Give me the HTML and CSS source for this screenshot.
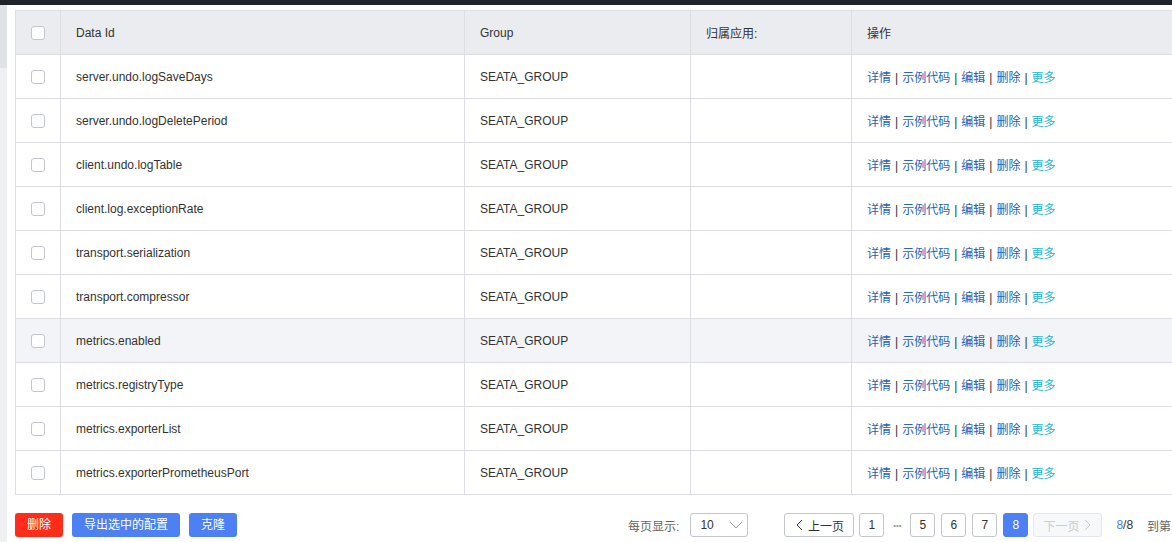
FILE: index.html
```html
<!DOCTYPE html>
<html lang="zh-CN">
<head>
<meta charset="utf-8">
<title>配置列表</title>
<link rel="stylesheet" href="styles.css">
</head>
<body>
<div class="topbar"></div>
<div class="layout">
  <div class="side"><div class="side-top"></div></div>
  <div class="main">
    <table class="grid">
      <colgroup>
        <col class="c-check"><col class="c-id"><col class="c-group"><col class="c-app"><col class="c-op">
      </colgroup>
      <thead>
        <tr><th class="chk"><span class="cb"></span></th><th>Data Id</th><th>Group</th><th>归属应用:</th><th>操作</th></tr>
      </thead>
      <tbody>
        <tr><td class="chk"><span class="cb"></span></td><td>server.undo.logSaveDays</td><td>SEATA_GROUP</td><td></td><td class="ops"><a>详情</a><i>|</i><a>示例代码</a><i>|</i><a>编辑</a><i>|</i><a>删除</a><i>|</i><a class="more">更多</a></td></tr>
        <tr><td class="chk"><span class="cb"></span></td><td>server.undo.logDeletePeriod</td><td>SEATA_GROUP</td><td></td><td class="ops"><a>详情</a><i>|</i><a>示例代码</a><i>|</i><a>编辑</a><i>|</i><a>删除</a><i>|</i><a class="more">更多</a></td></tr>
        <tr><td class="chk"><span class="cb"></span></td><td>client.undo.logTable</td><td>SEATA_GROUP</td><td></td><td class="ops"><a>详情</a><i>|</i><a>示例代码</a><i>|</i><a>编辑</a><i>|</i><a>删除</a><i>|</i><a class="more">更多</a></td></tr>
        <tr><td class="chk"><span class="cb"></span></td><td>client.log.exceptionRate</td><td>SEATA_GROUP</td><td></td><td class="ops"><a>详情</a><i>|</i><a>示例代码</a><i>|</i><a>编辑</a><i>|</i><a>删除</a><i>|</i><a class="more">更多</a></td></tr>
        <tr><td class="chk"><span class="cb"></span></td><td>transport.serialization</td><td>SEATA_GROUP</td><td></td><td class="ops"><a>详情</a><i>|</i><a>示例代码</a><i>|</i><a>编辑</a><i>|</i><a>删除</a><i>|</i><a class="more">更多</a></td></tr>
        <tr><td class="chk"><span class="cb"></span></td><td>transport.compressor</td><td>SEATA_GROUP</td><td></td><td class="ops"><a>详情</a><i>|</i><a>示例代码</a><i>|</i><a>编辑</a><i>|</i><a>删除</a><i>|</i><a class="more">更多</a></td></tr>
        <tr class="hover"><td class="chk"><span class="cb"></span></td><td>metrics.enabled</td><td>SEATA_GROUP</td><td></td><td class="ops"><a>详情</a><i>|</i><a>示例代码</a><i>|</i><a>编辑</a><i>|</i><a>删除</a><i>|</i><a class="more">更多</a></td></tr>
        <tr><td class="chk"><span class="cb"></span></td><td>metrics.registryType</td><td>SEATA_GROUP</td><td></td><td class="ops"><a>详情</a><i>|</i><a>示例代码</a><i>|</i><a>编辑</a><i>|</i><a>删除</a><i>|</i><a class="more">更多</a></td></tr>
        <tr><td class="chk"><span class="cb"></span></td><td>metrics.exporterList</td><td>SEATA_GROUP</td><td></td><td class="ops"><a>详情</a><i>|</i><a>示例代码</a><i>|</i><a>编辑</a><i>|</i><a>删除</a><i>|</i><a class="more">更多</a></td></tr>
        <tr><td class="chk"><span class="cb"></span></td><td>metrics.exporterPrometheusPort</td><td>SEATA_GROUP</td><td></td><td class="ops"><a>详情</a><i>|</i><a>示例代码</a><i>|</i><a>编辑</a><i>|</i><a>删除</a><i>|</i><a class="more">更多</a></td></tr>
      </tbody>
    </table>
    <div class="footer">
      <div class="actions">
        <button class="btn danger">删除</button>
        <button class="btn primary">导出选中的配置</button>
        <button class="btn primary">克隆</button>
      </div>
      <div class="pager">
        <span class="label">每页显示:</span>
        <span class="select">10<svg class="arrow" width="14" height="8" viewBox="0 0 14 8"><path d="M1 1 L7 7 L13 1" fill="none" stroke="#999" stroke-width="1"/></svg></span>
        <span class="pbtn prev"><svg width="8" height="12" viewBox="0 0 8 12"><path d="M7 1 L2 6 L7 11" fill="none" stroke="#333" stroke-width="1"/></svg>上一页</span>
        <span class="pbtn num">1</span>
        <span class="dots">•••</span>
        <span class="pbtn num">5</span>
        <span class="pbtn num">6</span>
        <span class="pbtn num">7</span>
        <span class="pbtn num cur">8</span>
        <span class="pbtn next">下一页<svg width="8" height="12" viewBox="0 0 8 12"><path d="M1 1 L6 6 L1 11" fill="none" stroke="#ccc" stroke-width="1"/></svg></span>
        <span class="total"><b>8</b>/8</span>
        <span class="jump">到第</span>
        <span class="jinput"></span>
        <span class="jump">页</span>
      </div>
    </div>
  </div>
</div>
</body>
</html>
```
FILE: styles.css
```css
html, body {
  margin: 0;
  padding: 0;
  overflow: hidden;
  background: #fff;
  font-family: "Liberation Sans", Arial, "Noto Sans CJK SC", sans-serif;
  font-size: 12px;
  color: #333;
}
.topbar {
  height: 5px;
  background: #202329;
}
.layout {
  display: flex;
  height: 537px;
}
.side {
  width: 7px;
  flex: none;
  background: #eef0f3;
}
.side-top {
  height: 63px;
  background: #dfe2e6;
}
.main {
  flex: none;
  width: 1300px;
  padding: 5px 0 0 8px;
}
.grid {
  border-collapse: collapse;
  table-layout: fixed;
  width: 1240px;
  border: 1px solid #dcdee3;
}
.c-check { width: 45px; }
.c-id { width: 404px; }
.c-group { width: 226px; }
.c-app { width: 161px; }
.c-op { width: 404px; }
.grid th, .grid td {
  height: 44px;
  padding: 0 15px;
  border: 1px solid #dcdee3;
  text-align: left;
  font-weight: normal;
  color: #333;
  white-space: nowrap;
  box-sizing: border-box;
}
.grid th {
  background: #ebecf0;
}
.grid tr.hover td {
  background: #f2f4f7;
}
.grid .chk {
  padding: 0;
  text-align: center;
}
.cb {
  display: inline-block;
  width: 14px;
  height: 14px;
  border: 1px solid #c4c6cf;
  border-radius: 3px;
  background: #fff;
  box-sizing: border-box;
  vertical-align: middle;
}
.ops a {
  color: #2662b7;
}
.ops a.more {
  color: #27b5d0;
}
.ops i {
  font-style: normal;
  color: #333;
  margin: 0 4px;
}
.footer {
  display: flex;
  align-items: center;
  margin-top: 18px;
}
.actions {
  display: flex;
  gap: 9px;
}
.btn {
  height: 24px;
  padding: 0 12px;
  border: none;
  border-radius: 3px;
  color: #fff;
  font-family: inherit;
  font-size: 12px;
  line-height: 24px;
}
.btn.danger { background: #ff2d1a; }
.btn.primary { background: #4d80f3; }
.pager {
  display: flex;
  align-items: center;
  margin-left: 391px;
  white-space: nowrap;
}
.label {
  color: #666;
  margin-right: 11px;
}
.select {
  display: inline-flex;
  align-items: center;
  justify-content: space-between;
  box-sizing: border-box;
  width: 58px;
  height: 24px;
  padding: 0 4px 0 9px;
  border: 1px solid #c4c6cf;
  border-radius: 3px;
  color: #333;
}
.pbtn {
  display: inline-flex;
  align-items: center;
  justify-content: center;
  box-sizing: border-box;
  height: 24px;
  border: 1px solid #c4c6cf;
  border-radius: 3px;
  background: #fff;
  color: #333;
}
.prev {
  width: 70px;
  margin-left: 36px;
  gap: 5px;
}
.num {
  width: 25px;
  margin-left: 6px;
}
.prev + .num { margin-left: 5px; }
.num.cur {
  background: #4d80f3;
  border-color: #4d80f3;
  color: #fff;
}
.dots {
  width: 14px;
  margin-left: 6px;
  color: #999;
  font-size: 8px;
  text-align: center;
}
.next {
  width: 69px;
  margin-left: 5px;
  gap: 5px;
  background: #f7f8fa;
  border-color: #e6e7eb;
  color: #ccc;
}
.total {
  margin-left: 14px;
  color: #333;
}
.total b {
  font-weight: normal;
  color: #4d80f3;
}
.jump {
  margin-left: 14px;
  color: #666;
}
.jinput {
  display: inline-block;
  width: 40px;
  height: 24px;
  margin-left: 6px;
  border: 1px solid #c4c6cf;
  border-radius: 3px;
  box-sizing: border-box;
}
```
